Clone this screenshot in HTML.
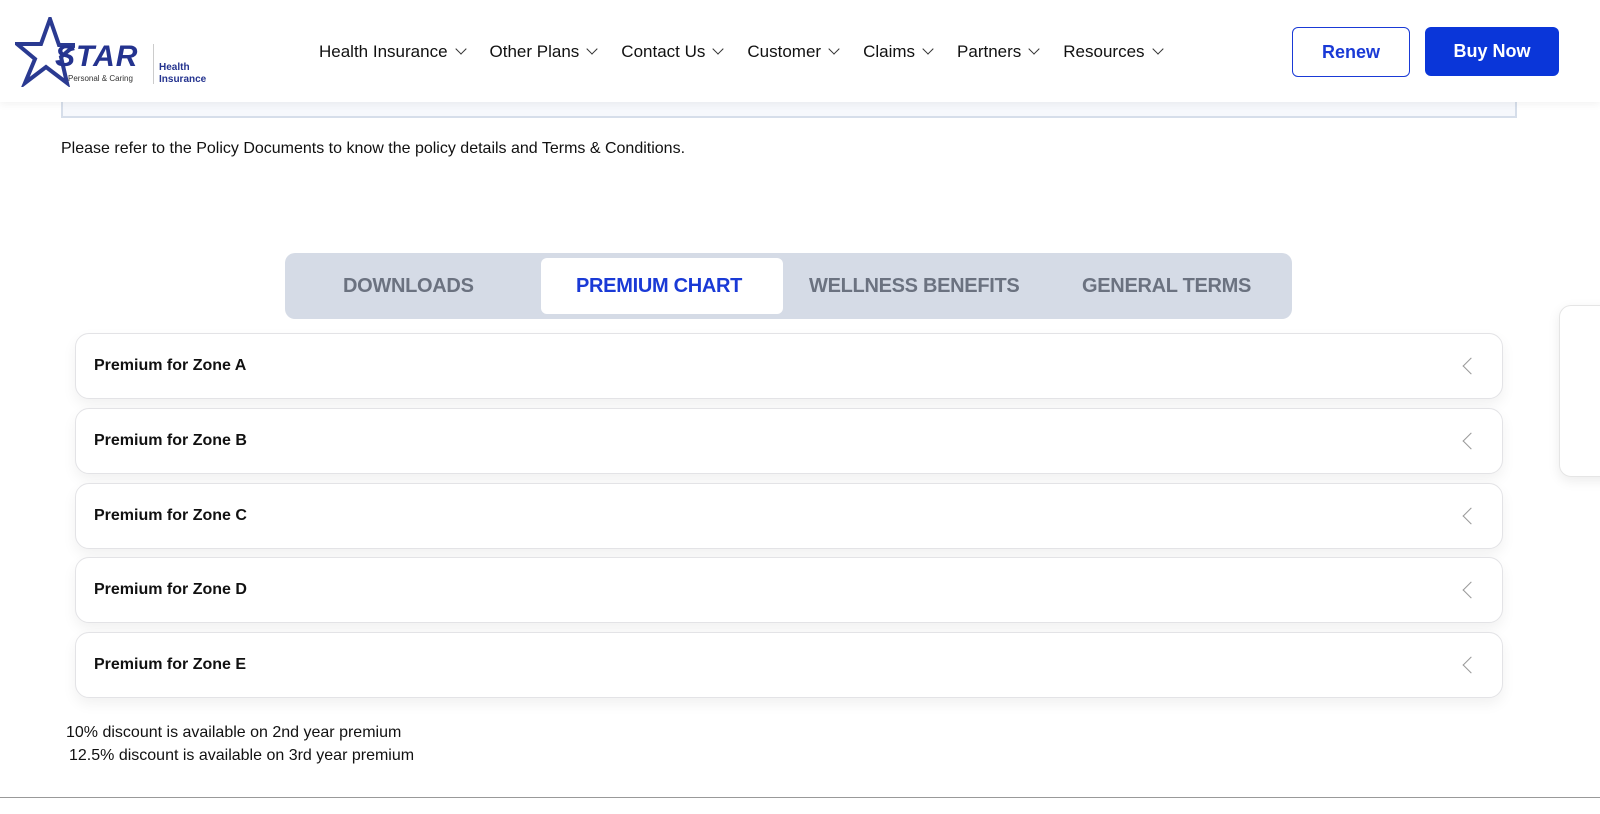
<!DOCTYPE html>
<html><head><meta charset="utf-8"><style>
body{margin:0;width:1600px;height:814px;background:#fff;font-family:"Liberation Sans",sans-serif;position:relative;overflow:hidden;color:#111}
.box{position:absolute;left:61px;top:60px;width:1452px;height:56px;border:2px solid #d6deea;border-top:none;background:#f6f8fc}
header{position:absolute;left:0;top:0;width:1600px;height:102px;background:#fff;box-shadow:0 2px 8px rgba(0,0,0,.06)}
nav{position:absolute;left:319px;top:42px;font-size:17px;color:#111;white-space:nowrap}
nav span{margin-right:25px}
nav span:after{content:"";display:inline-block;width:7px;height:7px;border-right:1.5px solid #333;border-bottom:1.5px solid #333;transform:rotate(45deg);margin-left:9px;position:relative;top:-4px}
.btn{position:absolute;top:27px;height:48px;border-radius:6px;font-weight:bold;font-size:18px;display:flex;align-items:center;justify-content:center}
.note{position:absolute;left:61px;top:140px;font-size:16px}
.tabs{position:absolute;left:285px;top:253px;width:1007px;height:66px;background:#d5dbe6;border-radius:10px}
.tab{position:absolute;top:0;height:66px;line-height:66px;font-size:20px;font-weight:bold;color:#6b7280;letter-spacing:-.3px}
.act{position:absolute;left:256px;top:5px;width:242px;height:56px;background:#fff;border-radius:6px}
.acc{position:absolute;left:75px;width:1426px;height:64px;border:1px solid #e3e3e6;border-radius:14px;background:#fff;box-shadow:0 6px 14px rgba(0,0,0,.06)}
.acc b{position:absolute;left:18px;top:23px;font-size:16px}
.acc i{position:absolute;right:25px;top:26px;width:11px;height:11px;border-left:1.5px solid #999;border-bottom:1.5px solid #999;transform:rotate(45deg)}
.d{position:absolute;font-size:16px}
</style></head><body>
<div class="box"></div>
<header>
<svg style="position:absolute;left:15px;top:17px" width="60" height="70" viewBox="0 0 60 70"><polygon points="35,2 44,28 60,28 46,40 52,66 31,50 10,66 20,42 2,27 26,27" fill="none" stroke="#2a3a91" stroke-width="4"/></svg>
<div style="position:absolute;left:55px;top:43px;font:900 30px 'Liberation Sans';color:#24338f;font-style:italic;letter-spacing:1px;line-height:28px">STAR</div>
<div style="position:absolute;left:68px;top:74px;font-size:8px;color:#333">Personal &amp; Caring</div>
<div style="position:absolute;left:153px;top:44px;width:1px;height:40px;background:#ccc"></div>
<div style="position:absolute;left:159px;top:62px;font-size:10px;font-weight:bold;color:#24338f;line-height:12px">Health<br>Insurance</div>
<nav><span>Health Insurance</span><span>Other Plans</span><span>Contact Us</span><span>Customer</span><span>Claims</span><span>Partners</span><span>Resources</span></nav>
<div class="btn" style="left:1292px;width:116px;border:1.5px solid #1a3ad6;color:#1a3ad6">Renew</div>
<div class="btn" style="left:1425px;width:134px;background:#0a36d9;color:#fff;top:27px;height:49px">Buy Now</div>
</header>
<div class="note">Please refer to the Policy Documents to know the policy details and Terms &amp; Conditions.</div>
<div class="tabs"><div class="act"></div>
<div class="tab" style="left:58px">DOWNLOADS</div>
<div class="tab" style="left:291px;color:#1a3ad6">PREMIUM CHART</div>
<div class="tab" style="left:524px">WELLNESS BENEFITS</div>
<div class="tab" style="left:797px">GENERAL TERMS</div></div>
<div class="acc" style="top:333px"><b>Premium for Zone A</b><i></i></div>
<div class="acc" style="top:408px"><b>Premium for Zone B</b><i></i></div>
<div class="acc" style="top:483px"><b>Premium for Zone C</b><i></i></div>
<div class="acc" style="top:557px"><b>Premium for Zone D</b><i></i></div>
<div class="acc" style="top:632px"><b>Premium for Zone E</b><i></i></div>
<div style="position:absolute;left:1559px;top:305px;width:60px;height:170px;border:1px solid #e5e5e5;border-radius:12px;box-shadow:0 4px 12px rgba(0,0,0,.08)"></div>
<div class="d" style="left:66px;top:724px">10% discount is available on 2nd year premium</div>
<div class="d" style="left:69px;top:747px">12.5% discount is available on 3rd year premium</div>
<div style="position:absolute;left:0;top:797px;width:1600px;height:1px;background:#999"></div>
</body></html>
